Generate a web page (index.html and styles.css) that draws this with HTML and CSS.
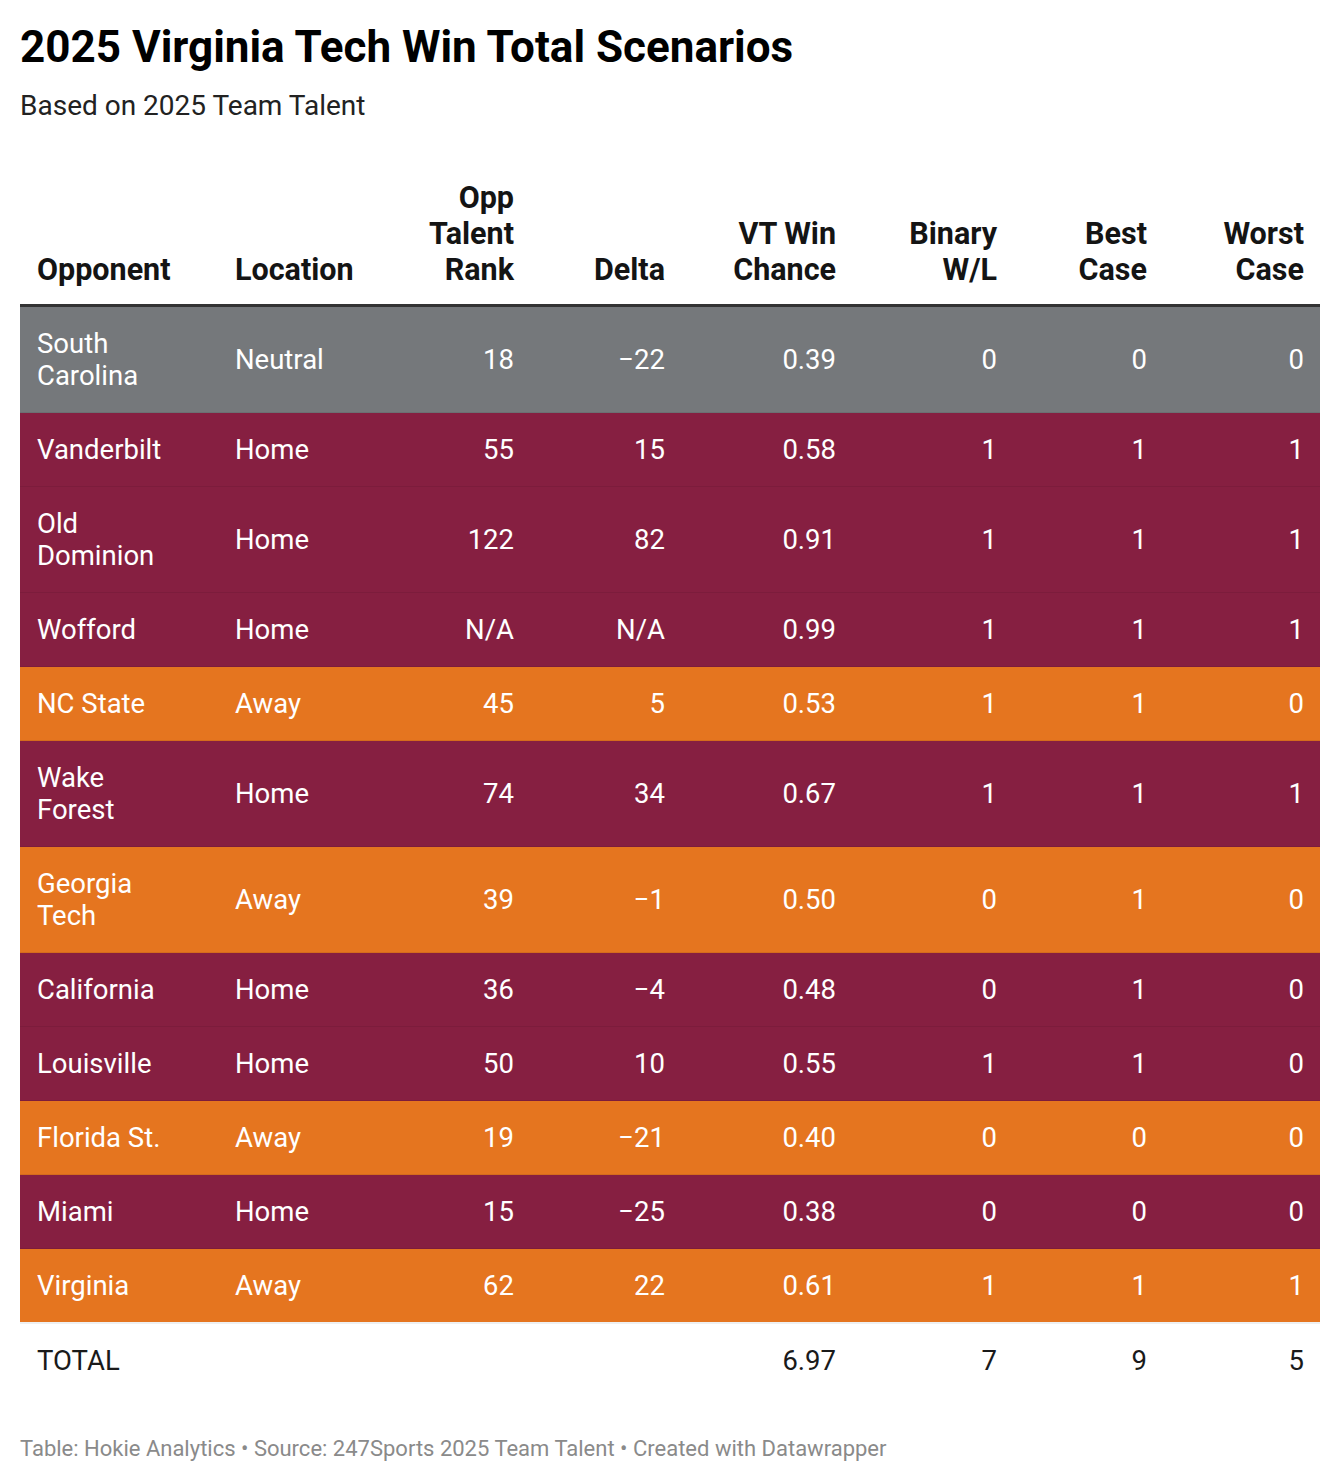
FILE: index.html
```html
<!DOCTYPE html>
<html lang="en">
<head>
<meta charset="utf-8">
<title>2025 Virginia Tech Win Total Scenarios</title>
<link rel="stylesheet" href="styles.css">
</head>
<body>
<div class="chart">
  <h1 class="title">2025 Virginia Tech Win Total Scenarios</h1>
  <p class="subtitle">Based on 2025 Team Talent</p>
  <table class="data">
    <colgroup>
      <col class="c1"><col class="c2"><col class="c3"><col class="c4">
      <col class="c5"><col class="c6"><col class="c7"><col class="c8">
    </colgroup>
    <thead>
      <tr>
        <th class="l">Opponent</th>
        <th class="l">Location</th>
        <th>Opp Talent Rank</th>
        <th>Delta</th>
        <th>VT Win Chance</th>
        <th>Binary W/L</th>
        <th>Best Case</th>
        <th>Worst Case</th>
      </tr>
    </thead>
    <tbody>
      <tr class="gray"><td class="l name">South Carolina</td><td class="l">Neutral</td><td>18</td><td>−22</td><td>0.39</td><td>0</td><td>0</td><td>0</td></tr>
      <tr class="maroon"><td class="l name">Vanderbilt</td><td class="l">Home</td><td>55</td><td>15</td><td>0.58</td><td>1</td><td>1</td><td>1</td></tr>
      <tr class="maroon"><td class="l name">Old Dominion</td><td class="l">Home</td><td>122</td><td>82</td><td>0.91</td><td>1</td><td>1</td><td>1</td></tr>
      <tr class="maroon"><td class="l name">Wofford</td><td class="l">Home</td><td>N/A</td><td>N/A</td><td>0.99</td><td>1</td><td>1</td><td>1</td></tr>
      <tr class="orange"><td class="l name">NC State</td><td class="l">Away</td><td>45</td><td>5</td><td>0.53</td><td>1</td><td>1</td><td>0</td></tr>
      <tr class="maroon"><td class="l name">Wake Forest</td><td class="l">Home</td><td>74</td><td>34</td><td>0.67</td><td>1</td><td>1</td><td>1</td></tr>
      <tr class="orange"><td class="l name">Georgia Tech</td><td class="l">Away</td><td>39</td><td>−1</td><td>0.50</td><td>0</td><td>1</td><td>0</td></tr>
      <tr class="maroon"><td class="l name">California</td><td class="l">Home</td><td>36</td><td>−4</td><td>0.48</td><td>0</td><td>1</td><td>0</td></tr>
      <tr class="maroon"><td class="l name">Louisville</td><td class="l">Home</td><td>50</td><td>10</td><td>0.55</td><td>1</td><td>1</td><td>0</td></tr>
      <tr class="orange"><td class="l name">Florida St.</td><td class="l">Away</td><td>19</td><td>−21</td><td>0.40</td><td>0</td><td>0</td><td>0</td></tr>
      <tr class="maroon"><td class="l name">Miami</td><td class="l">Home</td><td>15</td><td>−25</td><td>0.38</td><td>0</td><td>0</td><td>0</td></tr>
      <tr class="orange"><td class="l name">Virginia</td><td class="l">Away</td><td>62</td><td>22</td><td>0.61</td><td>1</td><td>1</td><td>1</td></tr>
      <tr class="total"><td class="l name">TOTAL</td><td class="l"></td><td></td><td></td><td>6.97</td><td>7</td><td>9</td><td>5</td></tr>
    </tbody>
  </table>
  <p class="footer">Table: Hokie Analytics • Source: 247Sports 2025 Team Talent • Created with Datawrapper</p>
</div>
</body>
</html>
```
FILE: styles.css
```css
* { box-sizing: border-box; }
html, body { margin: 0; padding: 0; background: #ffffff; }
body {
  font-family: Roboto, "Liberation Sans", Arial, sans-serif;
  color: #181818;
}
.chart {
  padding: 21px 20px 0 20px;
}
.title {
  margin: 0;
  font-size: 44px;
  line-height: 52px;
  font-weight: 700;
  color: #000;
}
.subtitle {
  margin: 17px 0 0 0;
  font-size: 28px;
  line-height: 32px;
  font-weight: 400;
  color: #222;
}
.data {
  margin-top: 51px;
  width: 1300px;
  border-collapse: collapse;
  table-layout: fixed;
  font-variant-numeric: tabular-nums;
}
.c1 { width: 198px; }
.c2 { width: 170px; }
.c3 { width: 142px; }
.c4 { width: 151px; }
.c5 { width: 171px; }
.c6 { width: 161px; }
.c7 { width: 150px; }
.c8 { width: 157px; }
.data th {
  font-size: 30.5px;
  line-height: 36px;
  font-weight: 700;
  color: #141414;
  text-align: right;
  vertical-align: bottom;
  padding: 7px 16px 16px 17px;
  border-bottom: 3px solid #333333;
}
.data td {
  font-size: 27.5px;
  line-height: 32px;
  text-align: right;
  vertical-align: middle;
  padding: 21px 16px 20px 17px;
  color: #ffffff;
}
.data .l { text-align: left; }
.data td.name { padding-right: 41px; }
.data tbody tr + tr td { border-top: 1px solid rgba(0, 0, 0, 0.07); }
.gray td { background: #75787b; }
.maroon td { background: #861f41; }
.orange td { background: #e5751f; }
.data tbody tr.total td {
  background: #ffffff;
  color: #1a1a1a;
  border-top: 2px solid #eef0f1;
}
.footer {
  margin: 39px 0 0 0;
  font-size: 22px;
  line-height: 26px;
  color: #8a8a8a;
}
```
